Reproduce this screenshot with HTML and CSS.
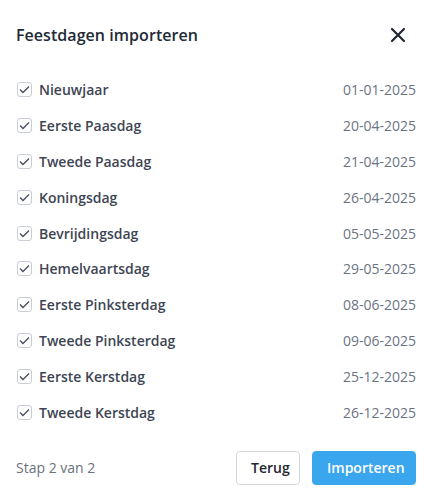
FILE: index.html
```html
<!DOCTYPE html>
<html lang="nl">
<head>
<meta charset="utf-8">
<link rel="stylesheet" href="styles.css">
</head>
<body>
<div class="modal">
  <div class="header">
    <h2 class="title">Feestdagen importeren</h2>
    <button class="close" aria-label="Sluiten">
      <svg width="16" height="16" viewBox="0 0 16 16"><path d="M2 2 L14 14 M14 2 L2 14" stroke="#1f2733" stroke-width="2.2" stroke-linecap="round"/></svg>
    </button>
  </div>
  <ul class="list">
    <li class="row"><span class="check"><svg width="11" height="9" viewBox="0 0 11 9"><path d="M1 4.5 L4 7.5 L10 1.5" fill="none" stroke="#4a5160" stroke-width="1.4"/></svg></span><span class="name">Nieuwjaar</span><span class="date">01-01-2025</span></li>
    <li class="row"><span class="check"><svg width="11" height="9" viewBox="0 0 11 9"><path d="M1 4.5 L4 7.5 L10 1.5" fill="none" stroke="#4a5160" stroke-width="1.4"/></svg></span><span class="name">Eerste Paasdag</span><span class="date">20-04-2025</span></li>
    <li class="row"><span class="check"><svg width="11" height="9" viewBox="0 0 11 9"><path d="M1 4.5 L4 7.5 L10 1.5" fill="none" stroke="#4a5160" stroke-width="1.4"/></svg></span><span class="name">Tweede Paasdag</span><span class="date">21-04-2025</span></li>
    <li class="row"><span class="check"><svg width="11" height="9" viewBox="0 0 11 9"><path d="M1 4.5 L4 7.5 L10 1.5" fill="none" stroke="#4a5160" stroke-width="1.4"/></svg></span><span class="name">Koningsdag</span><span class="date">26-04-2025</span></li>
    <li class="row"><span class="check"><svg width="11" height="9" viewBox="0 0 11 9"><path d="M1 4.5 L4 7.5 L10 1.5" fill="none" stroke="#4a5160" stroke-width="1.4"/></svg></span><span class="name">Bevrijdingsdag</span><span class="date">05-05-2025</span></li>
    <li class="row"><span class="check"><svg width="11" height="9" viewBox="0 0 11 9"><path d="M1 4.5 L4 7.5 L10 1.5" fill="none" stroke="#4a5160" stroke-width="1.4"/></svg></span><span class="name">Hemelvaartsdag</span><span class="date">29-05-2025</span></li>
    <li class="row"><span class="check"><svg width="11" height="9" viewBox="0 0 11 9"><path d="M1 4.5 L4 7.5 L10 1.5" fill="none" stroke="#4a5160" stroke-width="1.4"/></svg></span><span class="name">Eerste Pinksterdag</span><span class="date">08-06-2025</span></li>
    <li class="row"><span class="check"><svg width="11" height="9" viewBox="0 0 11 9"><path d="M1 4.5 L4 7.5 L10 1.5" fill="none" stroke="#4a5160" stroke-width="1.4"/></svg></span><span class="name">Tweede Pinksterdag</span><span class="date">09-06-2025</span></li>
    <li class="row"><span class="check"><svg width="11" height="9" viewBox="0 0 11 9"><path d="M1 4.5 L4 7.5 L10 1.5" fill="none" stroke="#4a5160" stroke-width="1.4"/></svg></span><span class="name">Eerste Kerstdag</span><span class="date">25-12-2025</span></li>
    <li class="row"><span class="check"><svg width="11" height="9" viewBox="0 0 11 9"><path d="M1 4.5 L4 7.5 L10 1.5" fill="none" stroke="#4a5160" stroke-width="1.4"/></svg></span><span class="name">Tweede Kerstdag</span><span class="date">26-12-2025</span></li>
  </ul>
  <div class="footer">
    <span class="step">Stap 2 van 2</span>
    <div class="actions">
      <button class="btn btn-secondary">Terug</button>
      <button class="btn btn-primary">Importeren</button>
    </div>
  </div>
</div>
</body>
</html>
```
FILE: styles.css
```css
* { box-sizing: border-box; }
html, body { margin: 0; padding: 0; background: #ffffff; }
body {
  font-family: "Open Sans", "Noto Sans", sans-serif;
  color: #374151;
  width: 436px;
  height: 503px;
  overflow: hidden;
}
.modal {
  padding: 0 20px 0 16px;
}
.header {
  display: flex;
  align-items: center;
  justify-content: space-between;
  height: 70px;
}
.title {
  margin: 0;
  font-size: 16px;
  font-weight: 600;
  color: #222a36;
  letter-spacing: 0.05px;
}
.close {
  border: 0;
  background: none;
  padding: 0;
  width: 16px;
  height: 16px;
  margin-right: 10px;
  display: flex;
  cursor: pointer;
}
.list {
  list-style: none;
  margin: 2px 0 0;
  padding: 0;
}
.row {
  display: flex;
  align-items: center;
  height: 35.8px;
}
.check {
  width: 15px;
  height: 15px;
  border: 1px solid #c9ced6;
  border-radius: 3px;
  display: flex;
  align-items: center;
  justify-content: center;
  margin-left: 1px;
  margin-right: 7px;
}
.name {
  flex: 1;
  font-size: 14px;
  font-weight: 600;
  color: #3e4553;
}
.date {
  font-size: 14px;
  color: #6b7383;
}
.footer {
  display: flex;
  align-items: center;
  justify-content: space-between;
  margin-top: 21px;
}
.step {
  font-size: 14px;
  color: #6b7280;
}
.actions {
  display: flex;
  gap: 12px;
}
.btn {
  font-family: "Open Sans", "Noto Sans", sans-serif;
  font-size: 14px;
  font-weight: 600;
  height: 34px;
  border-radius: 4px;
  padding: 0 14px;
  cursor: pointer;
}
.btn-secondary {
  background: #ffffff;
  border: 1px solid #d4d8de;
  color: #1f2733;
  width: 64px;
}
.btn-primary {
  background: #39a6ee;
  border: 1px solid #39a6ee;
  color: #ffffff;
  width: 104px;
}
```
